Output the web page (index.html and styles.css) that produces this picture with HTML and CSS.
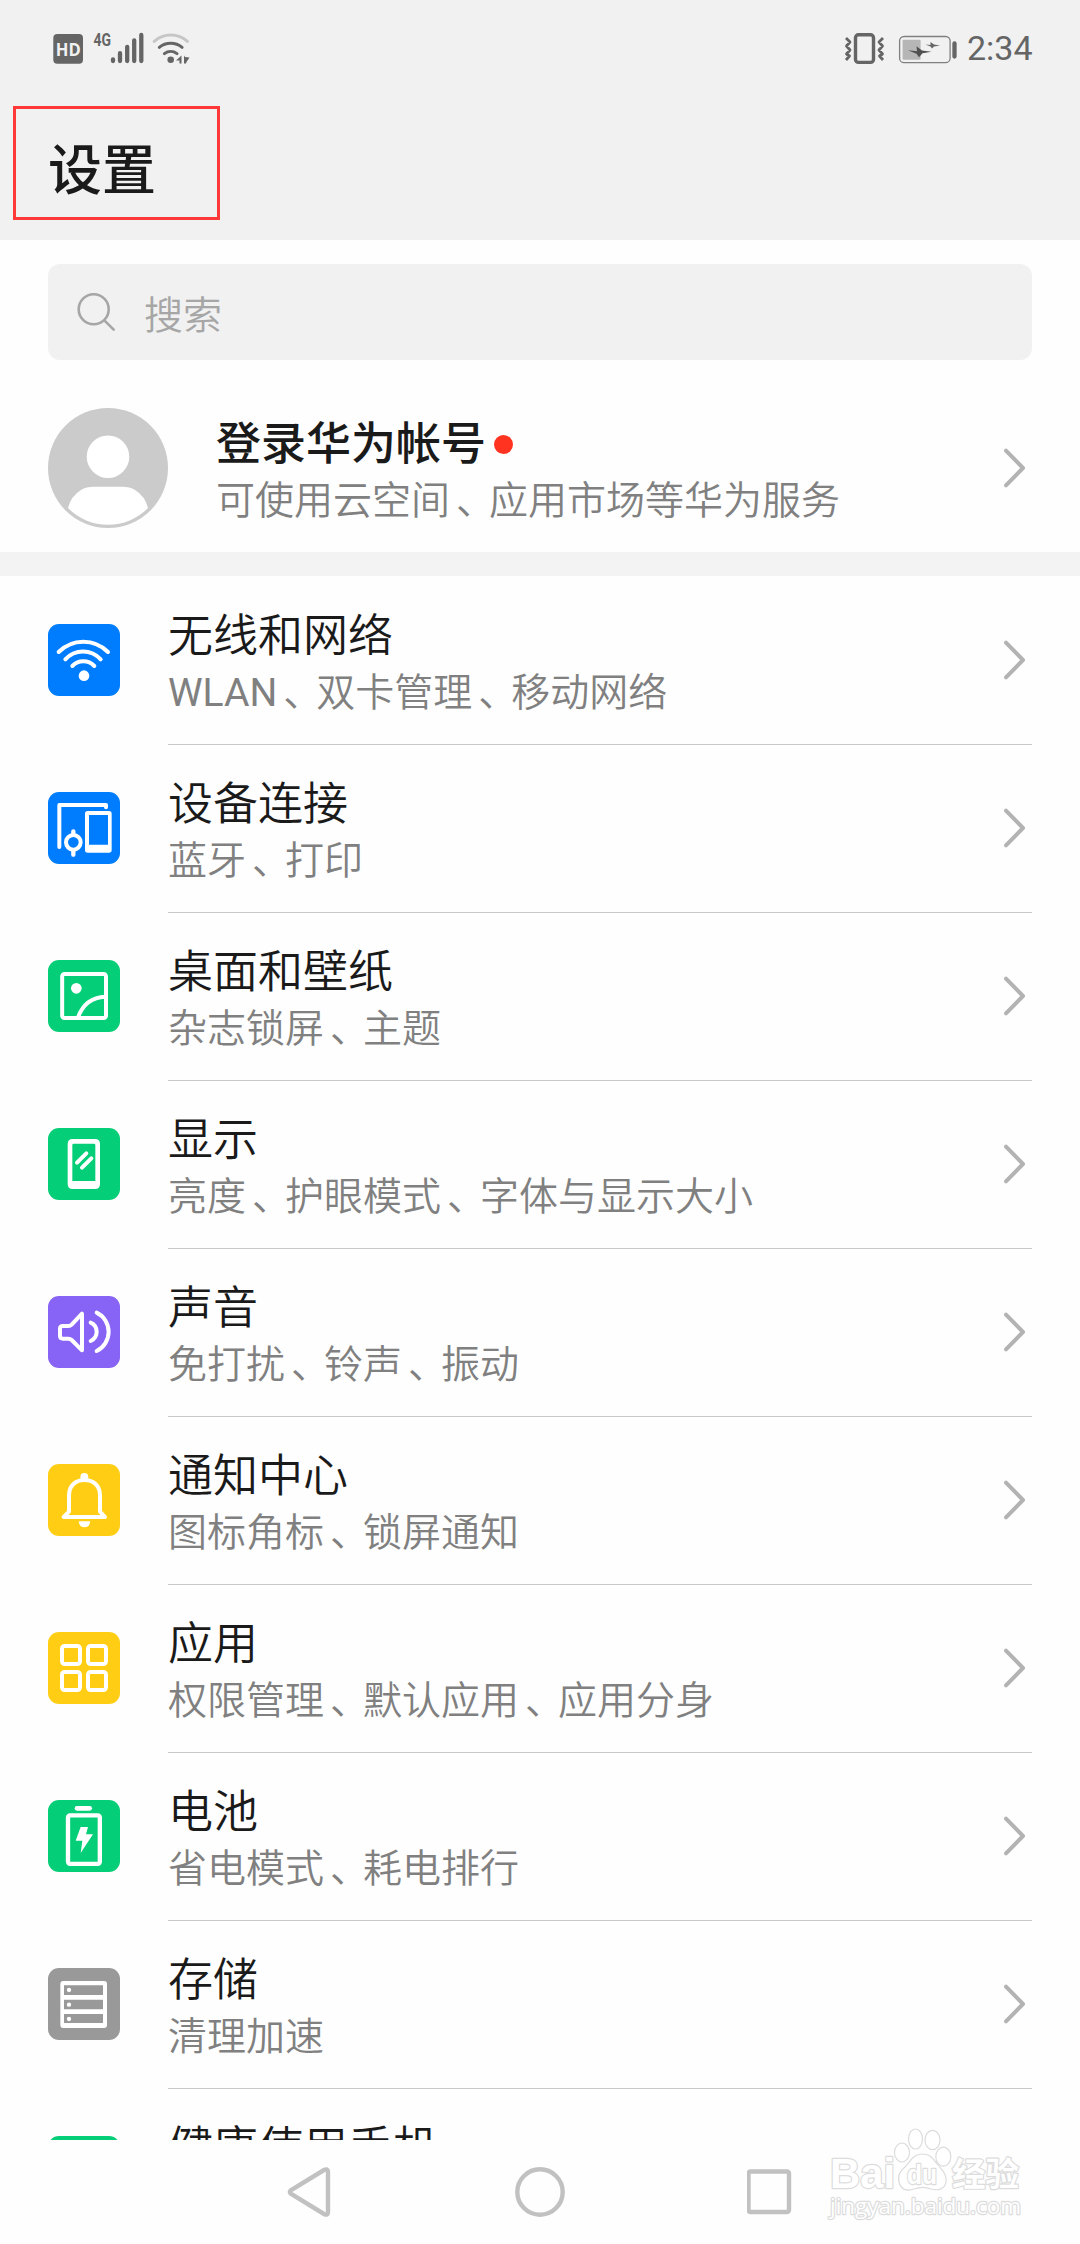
FILE: index.html
```html
<!DOCTYPE html>
<html lang="zh-CN">
<head>
<meta charset="utf-8">
<title>设置</title>
<link rel="stylesheet" href="styles.css">
</head>
<body>
<div class="screen">
  <header class="header">
    <div class="status">
      <svg class="status-left" width="140" height="36" viewBox="0 0 140 36">
        <rect x="0.3" y="4" width="29.7" height="29.7" rx="4" fill="#656565"/>
        <text class="hd" x="15.2" y="25.6" text-anchor="middle" textLength="25" lengthAdjust="spacingAndGlyphs">HD</text>
        <text class="net" x="40.5" y="16.3" textLength="17.5" lengthAdjust="spacingAndGlyphs">4G</text>
        <g stroke="#656565" stroke-width="4.3" stroke-linecap="round">
          <path d="M60 29.3v1.7M67 23.2v7.8M74.2 17v14M81.2 10.5v20.5M88.3 5v26"/>
        </g>
        <g fill="none" stroke-width="3" stroke-linecap="round" stroke="#656565">
          <path stroke="#c6c6c6" d="M101.2 11.4a25 25 0 0 1 33.2 0"/>
          <path d="M106.300 17.300a18 18 0 0 1 22.800 0M111.400 23.600a10.500 10.500 0 0 1 12.600 0"/>
        </g>
        <circle cx="117.700" cy="29.800" r="3.300" fill="#656565"/>
        <path fill="#656565" d="M128.500 25.500v8h-2v-3h-3.500zM131 25.500l1 1.500 4.500 0.500-3 4.500-0.500 1.500h-2z"/>
      </svg>
      <div class="status-right">
        <svg width="114" height="36" viewBox="0 0 114 36">
          <g fill="none" stroke="#656565">
            <rect x="12.500" y="4.800" width="18" height="27.600" rx="3" stroke-width="3.400"/>
            <path stroke-width="2.800" stroke-linejoin="round" d="M3 8l4 4-3.500 4 3.500 4-3.500 4 3 2-3.500 4M40 8l-4 4 3.500 4-3.500 4 3.500 4-3 2 3.500 4"/>
            <rect x="56.600" y="6.500" width="50.500" height="26.200" rx="4.500" stroke-width="1.300" stroke="#808080"/>
          </g>
          <rect x="59.600" y="9.700" width="18" height="20" rx="1" fill="#b6b6b6"/>
          <path fill="#505050" d="M65 20.200l9 1-0.500-5 5.500 4.300 9.500 1.200-9 1.500-3.500 4-2.500-3.500z"/>
          <path fill="#656565" d="M82.500 14.500l5 0.500 0-3 3.500 2.500 6 1-6 1-2 2-1.500-2z"/>
          <path stroke="#656565" stroke-width="4.300" stroke-linecap="round" d="M111.500 13.500v13"/>
        </svg>
        <span class="clock">2:34</span>
      </div>
    </div>
    <h1 class="title">设置</h1>
    <div class="mark"></div>
  </header>

  <main class="content">
    <div class="search">
      <svg width="40" height="40" viewBox="0 0 40 40" fill="none" stroke="#a6a6a6" stroke-width="2.600" stroke-linecap="round"><circle cx="17.700" cy="17.300" r="15"/><path d="M28.300 28.300l9.400 9.400"/></svg>
      <span>搜索</span>
    </div>

    <section class="account">
      <svg class="avatar" viewBox="0 0 120 120"><circle cx="60" cy="60" r="60" fill="#cbcbcb"/><circle cx="60" cy="48.700" r="21.300" fill="#fff"/><path fill="#fff" d="M20 100Q23 88 33 82Q38 78.700 46 78.700H74Q82 78.700 87 82Q97 88 100 100A56 56 0 0 1 20 100Z"/></svg>
      <div class="body">
        <div class="name strong">登录华为帐号<i class="dot"></i></div>
        <div class="desc">可使用云空间<b>、</b>应用市场等华为服务</div>
      </div>
      <svg class="chev" viewBox="0 0 24 40"><path d="M3 2.700L20 20L3 37.300"/></svg>
    </section>

    <ul class="list">
      <li class="row">
        <svg class="icon blue" viewBox="0 0 216 216"><path d="M32 84A104 104 0 0 1 180 84M52 106A71 71 0 0 1 158 106M73 126A46 46 0 0 1 139 126"/><circle class="solid" cx="108" cy="155" r="16"/></svg>
        <div class="body"><div class="name">无线和网络</div><div class="desc"><span class="latin">WLAN</span><b>、</b>双卡管理<b>、</b>移动网络</div></div>
        <svg class="chev" viewBox="0 0 24 40"><path d="M3 2.700L20 20L3 37.300"/></svg>
      </li>
      <li class="row">
        <svg class="icon blue" viewBox="0 0 216 216"><path d="M34 165V39H174V46"/><path class="solid" fill-rule="evenodd" d="M119 57H183Q191 57 191 65V174Q191 182 183 182H119Q111 182 111 174V65Q111 57 119 57ZM123 69V158H180V69Z"/><circle cx="76" cy="151" r="22"/><path d="M76 118V126M76 178V188" stroke-width="13"/></svg>
        <div class="body"><div class="name">设备连接</div><div class="desc">蓝牙<b>、</b>打印</div></div>
        <svg class="chev" viewBox="0 0 24 40"><path d="M3 2.700L20 20L3 37.300"/></svg>
      </li>
      <li class="row">
        <svg class="icon green" viewBox="0 0 216 216"><rect x="42.500" y="42" width="131.500" height="132" rx="7"/><path d="M90 172Q112 112 172 110"/><circle class="solid" cx="85" cy="85" r="16"/></svg>
        <div class="body"><div class="name">桌面和壁纸</div><div class="desc">杂志锁屏<b>、</b>主题</div></div>
        <svg class="chev" viewBox="0 0 24 40"><path d="M3 2.700L20 20L3 37.300"/></svg>
      </li>
      <li class="row">
        <svg class="icon green" viewBox="0 0 216 216"><path class="solid" fill-rule="evenodd" d="M74 33H141Q156 33 156 48V168Q156 183 141 183H74Q59 183 59 168V48Q59 33 74 33ZM77 47Q73 47 73 51V159H142V51Q142 47 138 47Z"/><path d="M87 104L115 76M102 119L130 91"/></svg>
        <div class="body"><div class="name">显示</div><div class="desc">亮度<b>、</b>护眼模式<b>、</b>字体与显示大小</div></div>
        <svg class="chev" viewBox="0 0 24 40"><path d="M3 2.700L20 20L3 37.300"/></svg>
      </li>
      <li class="row">
        <svg class="icon purple" viewBox="0 0 216 216"><path d="M45 90H61Q67 90 71 86L102 53V163L71 132Q67 128 61 128H45Q36 128 36 120V98Q36 90 45 90Z"/><path d="M128 80A30 30 0 0 1 128 135M146 50A64 64 0 0 1 146 165"/></svg>
        <div class="body"><div class="name">声音</div><div class="desc">免打扰<b>、</b>铃声<b>、</b>振动</div></div>
        <svg class="chev" viewBox="0 0 24 40"><path d="M3 2.700L20 20L3 37.300"/></svg>
      </li>
      <li class="row">
        <svg class="icon yellow" viewBox="0 0 216 216"><circle class="solid" cx="109" cy="39" r="12"/><path d="M63 143V94C63 65 83 48 109.500 48S156 65 156 94V143L171 159H47Z"/><path class="solid" d="M92 172H127Q125 190 109.500 190T92 172Z"/></svg>
        <div class="body"><div class="name">通知中心</div><div class="desc">图标角标<b>、</b>锁屏通知</div></div>
        <svg class="chev" viewBox="0 0 24 40"><path d="M3 2.700L20 20L3 37.300"/></svg>
      </li>
      <li class="row">
        <svg class="icon yellow" viewBox="0 0 216 216"><rect x="42" y="42" width="54" height="54" rx="8"/><rect x="120" y="42" width="54" height="54" rx="8"/><rect x="42" y="120" width="54" height="54" rx="8"/><rect x="120" y="120" width="54" height="54" rx="8"/></svg>
        <div class="body"><div class="name">应用</div><div class="desc">权限管理<b>、</b>默认应用<b>、</b>应用分身</div></div>
        <svg class="chev" viewBox="0 0 24 40"><path d="M3 2.700L20 20L3 37.300"/></svg>
      </li>
      <li class="row">
        <svg class="icon green" viewBox="0 0 216 216"><path d="M87 25H125" stroke-width="14"/><rect x="60" y="46" width="95.500" height="145.500" rx="6" stroke-width="13"/><path class="solid" d="M98 81H120L114 103H135L98 159L103 122H83Z"/></svg>
        <div class="body"><div class="name">电池</div><div class="desc">省电模式<b>、</b>耗电排行</div></div>
        <svg class="chev" viewBox="0 0 24 40"><path d="M3 2.700L20 20L3 37.300"/></svg>
      </li>
      <li class="row">
        <svg class="icon gray" viewBox="0 0 216 216"><path class="solid" fill-rule="evenodd" d="M46 39H168Q177 39 177 48V171Q177 180 168 180H46Q37 180 37 171V48Q37 39 46 39ZM48 52V81H165V52ZM48 95V124H165V95ZM48 138V165H165V138Z"/><circle class="solid" cx="63" cy="66" r="6.500"/><circle class="solid" cx="63" cy="110" r="6.500"/><circle class="solid" cx="63" cy="153" r="6.500"/></svg>
        <div class="body"><div class="name">存储</div><div class="desc">清理加速</div></div>
        <svg class="chev" viewBox="0 0 24 40"><path d="M3 2.700L20 20L3 37.300"/></svg>
      </li>
      <li class="row">
        <svg class="icon green" viewBox="0 0 216 216"></svg>
        <div class="body"><div class="name">健康使用手机</div></div>
      </li>
    </ul>
  </main>

  <nav class="nav">
    <svg width="50" height="56" viewBox="0 0 50 56"><path d="M8.200 26Q5.500 28 8.200 30L41 50Q45 52 45 48V8Q45 4 41 6Z"/></svg>
    <svg width="56" height="56" viewBox="0 0 56 56"><circle cx="28" cy="28" r="22.700"/></svg>
    <svg width="50" height="56" viewBox="0 0 50 56"><rect x="1.500" y="7.500" width="40.500" height="40.500" rx="2"/></svg>
  </nav>

  <svg class="watermark" width="220" height="110" viewBox="0 0 220 110">
    <text class="wm-bai" x="15" y="63.500" textLength="65" lengthAdjust="spacingAndGlyphs">Bai</text>
    <ellipse cx="87" cy="28.500" rx="7.500" ry="9.500"/><ellipse cx="100.500" cy="15" rx="7" ry="10"/><ellipse cx="117.500" cy="16" rx="7.500" ry="9.700"/><ellipse cx="128.300" cy="32.700" rx="7.500" ry="9.500"/>
    <path d="M107 30C99 30 95 37 91 42C86 47 82 50 84 58C86 67 94 67 99 65C105 63 111 63 116 65C123 67 130 65 131 58C132 50 127 46 123 41C118 35 116 30 107 30Z"/>
    <text class="wm-du" x="92" y="60" textLength="30" lengthAdjust="spacingAndGlyphs">du</text>
    <text class="wm-cn" x="137" y="61.500" textLength="67" lengthAdjust="spacingAndGlyphs">经验</text>
    <text class="wm-url" x="15" y="90" textLength="191" lengthAdjust="spacingAndGlyphs">jingyan.baidu.com</text>
  </svg>
</div>
</body>
</html>
```
FILE: styles.css
```css
* { box-sizing: border-box; margin: 0; padding: 0; }

body {
  background: #fefefe;
  font-family: "Noto Sans CJK SC", sans-serif;
  color: #1a1a1a;
}

.screen {
  position: relative;
  width: 1080px;
  height: 2244px;
  display: flex;
  flex-direction: column;
  overflow: hidden;
}

svg { display: block; flex: none; }

/* header */
.header {
  position: relative;
  flex: none;
  height: 240px;
  background: #f1f1f1;
}
.status {
  display: flex;
  justify-content: space-between;
  align-items: center;
  height: 96px;
  padding: 0 48px 0 53px;
}
.status-right { display: flex; align-items: center; gap: 10px; }
.clock {
  width: 65px;
  font-family: Roboto, sans-serif;
  font-size: 34px;
  line-height: 40px;
  color: #656565;
}
.hd { font: bold 17px "Open Sans", sans-serif; fill: #f1f1f1; }
.net { font: bold 18px Roboto, sans-serif; fill: #656565; }
.title {
  padding-top: 35px;
  padding-left: 48px;
  font-size: 54px;
  line-height: 72px;
  font-weight: 500;
}
.mark {
  position: absolute;
  left: 13px;
  top: 106px;
  width: 207px;
  height: 114px;
  border: 3px solid #ff3838;
}

.content { flex: none; height: 1900px; overflow: hidden; }

/* search field */
.search {
  display: flex;
  align-items: center;
  gap: 28px;
  height: 96px;
  margin: 24px 48px 0;
  padding-left: 28px;
  border-radius: 12px;
  background: #f1f1f1;
  color: #a6a6a6;
  font-size: 39px;
  line-height: 48px;
  font-weight: 350;
}

/* rows */
.account, .row {
  display: flex;
  align-items: center;
  padding-left: 48px;
  padding-right: 51px;
}
.account {
  height: 216px;
  padding-top: 24px;
  border-bottom: 24px solid #f3f3f3;
}
.avatar { width: 120px; height: 120px; }
.body {
  flex: 1;
  align-self: stretch;
  margin-left: 48px;
  padding-top: 29px;
}
.name {
  font-size: 45px;
  line-height: 56px;
  font-weight: 350;
  white-space: nowrap;
}
.strong { font-weight: 500; }
.desc {
  margin-top: 4px;
  font-size: 39px;
  line-height: 48px;
  font-weight: 350;
  color: #808080;
  white-space: nowrap;
}
.desc b { font-weight: inherit; margin-left: 6px; letter-spacing: -6px; }
.latin { font-family: Roboto, sans-serif; font-weight: 400; }
.dot {
  display: inline-block;
  width: 19px;
  height: 19px;
  margin-left: 8px;
  border-radius: 50%;
  background: #ff3320;
  vertical-align: 6px;
}
.chev { width: 24px; height: 40px; margin-right: 2px; }
.chev path {
  fill: none;
  stroke: #b3b3b3;
  stroke-width: 4;
  stroke-linecap: round;
  stroke-linejoin: round;
}

.list { list-style: none; }
.row { height: 168px; position: relative; }
.row + .row::before {
  content: "";
  position: absolute;
  top: 0;
  left: 168px;
  right: 48px;
  height: 1px;
  background: #c8c8c8;
}

.icon {
  width: 72px;
  height: 72px;
  border-radius: 11px;
  fill: none;
  stroke: #fff;
  stroke-width: 12px;
  stroke-linecap: round;
  stroke-linejoin: round;
}
.solid { fill: #fff; stroke: none; }
.blue { background: #007dff; }
.green { background: #05ce78; }
.purple { background: #8763f6; }
.yellow { background: #ffce14; }
.gray { background: #999; }

/* system navigation */
.nav {
  flex: none;
  display: flex;
  justify-content: space-between;
  align-items: center;
  height: 104px;
  padding: 0 283px;
}
.nav svg { fill: none; stroke: #c1c1c1; stroke-width: 4.400; }

.watermark {
  position: absolute;
  left: 815px;
  top: 2124px;
  fill: #fff;
  stroke: #dcdcdc;
  stroke-width: 1.200px;
}
.watermark text { paint-order: stroke; stroke-width: 2.400px; stroke-linejoin: round; }
.wm-bai { font: bold 42px "Liberation Sans", sans-serif; }
.wm-du { font: bold 27px "Liberation Sans", sans-serif; }
.wm-cn { font: bold 33px "Noto Sans CJK SC", sans-serif; }
.wm-url { font: 22px "Open Sans", sans-serif; }
```
